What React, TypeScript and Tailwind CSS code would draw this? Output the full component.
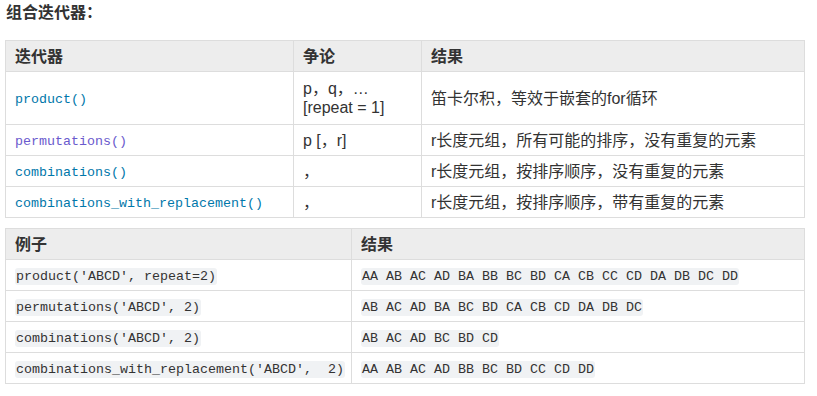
const sans = "font-['Liberation_Sans','Noto_Sans_CJK_SC',sans-serif]";
const mono = "font-['Liberation_Mono','Noto_Sans_CJK_SC',monospace] text-[13.33px]";

const iterRows = [
  { name: "product()", args: ["p，q，…", "[repeat = 1]"], result: "笛卡尔积，等效于嵌套的for循环", visited: false, tall: true },
  { name: "permutations()", args: ["p [，r]"], result: "r长度元组，所有可能的排序，没有重复的元素", visited: true, tall: false },
  { name: "combinations()", args: ["，"], result: "r长度元组，按排序顺序，没有重复的元素", visited: false, tall: false },
  { name: "combinations_with_replacement()", args: ["，"], result: "r长度元组，按排序顺序，带有重复的元素", visited: false, tall: false },
];

const examples = [
  { code: "product('ABCD', repeat=2)", out: "AA AB AC AD BA BB BC BD CA CB CC CD DA DB DC DD" },
  { code: "permutations('ABCD', 2)", out: "AB AC AD BA BC BD CA CB CD DA DB DC" },
  { code: "combinations('ABCD', 2)", out: "AB AC AD BC BD CD" },
  { code: "combinations_with_replacement('ABCD',  2)", out: "AA AB AC AD BB BC BD CC CD DD" },
];

const th = "border border-[#dddddd] px-[9px] h-[31px] text-left font-bold align-middle";
const td = "border border-[#dddddd] px-[9px] align-middle";

function Code({ children }: { children: string }) {
  return (
    <code className={`${mono} whitespace-pre rounded-[3px] bg-[#f0f2f4] px-[1px] py-[1px] text-[#333333]`}>
      {children}
    </code>
  );
}

export default function App() {
  return (
    <div className={`${sans} w-[817px] h-[396px] bg-white text-[16px] text-[#333333]`}>
      <div className="px-[6px] leading-[26px] font-bold">组合迭代器：</div>

      <table className="mt-[14px] ml-[5px] w-[800px] border-collapse leading-[19px]">
        <thead>
          <tr className="bg-[#ededed]">
            <th className={`${th} w-[288px]`}>迭代器</th>
            <th className={`${th} w-[128px]`}>争论</th>
            <th className={th}>结果</th>
          </tr>
        </thead>
        <tbody>
          {iterRows.map((r) => (
            <tr key={r.name} className={r.tall ? "h-[53px]" : "h-[31px]"}>
              <td className={td}>
                <code className={`${mono} ${r.visited ? "text-[#6a5acd]" : "text-[#0077aa]"}`}>{r.name}</code>
              </td>
              <td className={td}>
                {r.args.map((a) => (
                  <div key={a}>{a}</div>
                ))}
              </td>
              <td className={td}>{r.result}</td>
            </tr>
          ))}
        </tbody>
      </table>

      <table className="mt-[10px] ml-[5px] w-[800px] table-fixed border-collapse leading-[19px]">
        <thead>
          <tr className="bg-[#ededed]">
            <th className={`${th} w-[346px]`}>例子</th>
            <th className={th}>结果</th>
          </tr>
        </thead>
        <tbody>
          {examples.map((e) => (
            <tr key={e.code} className="h-[31px]">
              <td className={`${td} whitespace-nowrap`}>
                <Code>{e.code}</Code>
              </td>
              <td className={td}>
                <Code>{e.out}</Code>
              </td>
            </tr>
          ))}
        </tbody>
      </table>
    </div>
  );
}
